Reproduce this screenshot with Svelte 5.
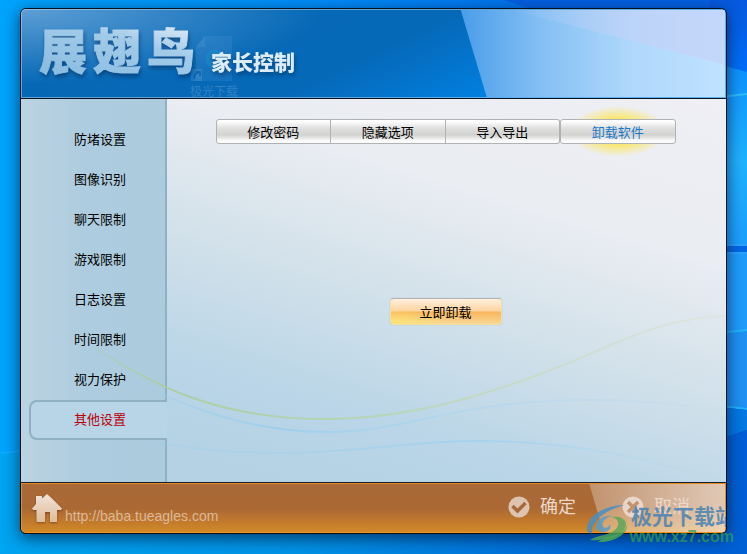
<script>
  const nav = ['防堵设置', '图像识别', '聊天限制', '游戏限制', '日志设置', '时间限制', '视力保护', '其他设置'];
  const tabs = ['修改密码', '隐藏选项', '导入导出', '卸载软件'];
  let currentNav = $state(7);
  let currentTab = $state(3);
</script>

<div class="desktop">
  <svg class="wallpaper" viewBox="0 0 747 554" preserveAspectRatio="none" aria-hidden="true">
    <defs>
      <linearGradient id="sky" x1="0" y1="0" x2="1" y2="0">
        <stop offset="0" stop-color="#00a4fc" />
        <stop offset="0.45" stop-color="#008cfa" />
        <stop offset="0.9" stop-color="#0560e2" />
        <stop offset="1" stop-color="#0458dc" />
      </linearGradient>
      <linearGradient id="floor" x1="0" y1="0" x2="1" y2="0">
        <stop offset="0" stop-color="#00a4f0" />
        <stop offset="0.4" stop-color="#0092e6" />
        <stop offset="0.8" stop-color="#0066d6" />
        <stop offset="1" stop-color="#005ed2" />
      </linearGradient>
      <linearGradient id="pane" x1="0" y1="0" x2="0" y2="1">
        <stop offset="0" stop-color="#0d90ff" />
        <stop offset="0.5" stop-color="#20b2ff" />
        <stop offset="1" stop-color="#1c9bff" />
      </linearGradient>
      <linearGradient id="deep" x1="0" y1="0" x2="0" y2="1">
        <stop offset="0" stop-color="#0759de" />
        <stop offset="1" stop-color="#0074ff" />
      </linearGradient>
    </defs>
    <rect width="747" height="554" fill="url(#sky)" />
    <rect y="454" width="747" height="100" fill="url(#floor)" />
    <path d="M503 0L747 74V0Z" fill="#0561e3" />
    <rect x="710" width="37" height="90" fill="url(#deep)" />
    <path d="M710 62L747 72V260H710Z" fill="url(#pane)" />
    <path d="M710 98L747 94" stroke="#2cc0ff" stroke-width="2" />
    <path d="M710 254H747V332L710 334Z" fill="#209cfd" />
    <path d="M710 245H747M710 253H747" stroke="#2aa4ff" stroke-width="2" />
    <rect x="710" y="246" width="37" height="6" fill="#0468e6" />
    <path d="M710 334L747 330V409L710 405Z" fill="#1f92f4" />
    <path d="M710 334L747 330M710 405L747 409" stroke="#20b8ff" stroke-width="2" />
    <path d="M710 406L747 410V430L710 442Z" fill="#0478e4" />
    <path d="M710 442L747 430V554H710Z" fill="#0160d4" />
    <path d="M0 453L21 451" stroke="#18b0ff" stroke-width="1" />
  </svg>

  <main class="window">
    <header>
      <svg class="sheen" viewBox="0 0 705 89" preserveAspectRatio="none" aria-hidden="true">
        <defs>
          <linearGradient id="glass" x1="0" y1="0" x2="1" y2="0">
            <stop offset="0" stop-color="#4b9dea" />
            <stop offset="0.3" stop-color="#84bff4" />
            <stop offset="0.65" stop-color="#b0d8fb" />
            <stop offset="1" stop-color="#bfe2ff" />
          </linearGradient>
          <linearGradient id="mist" x1="0" y1="0" x2="1" y2="0">
            <stop offset="0" stop-color="#c6d0f6" stop-opacity="0" />
            <stop offset="0.5" stop-color="#c6d0f6" stop-opacity="0.5" />
            <stop offset="1" stop-color="#c4d4f8" stop-opacity="0.8" />
          </linearGradient>
        </defs>
        <path d="M440 0H705V89H466Z" fill="url(#glass)" />
        <path d="M490 0H705V56Z" fill="url(#mist)" />
      </svg>
      <div class="ghost" aria-hidden="true">
        <svg width="44" height="48" viewBox="0 0 44 48">
          <path d="M15 1H42V46H6V12Z" fill="#6ba5d9" opacity="0.17" />
          <path d="M15 1V12H6Z" fill="#8fbde6" opacity="0.12" />
          <circle cx="25" cy="24" r="7" fill="none" stroke="#159bd4" stroke-width="5" opacity="0.35" />
          <path d="M1 34H12V46H1Z" fill="#8fbde6" opacity="0.2" />
          <path d="M4 44C4 40 5 38 8 38M6 37H10V41" fill="none" stroke="#0b62af" stroke-width="1.500" />
        </svg>
        <span>极光下载</span>
      </div>
      <h1><span>展</span><span>翅</span><span>鸟</span></h1>
      <h2>家长控制</h2>
    </header>

    <div class="body">
      <nav>
        {#each nav as item, i}
          <button class:active={i === currentNav} onclick={() => (currentNav = i)}>{item}</button>
        {/each}
      </nav>

      <section>
        <div class="tabs" role="tablist">
          {#each tabs as tab, i}
            <button role="tab" aria-selected={i === currentTab} onclick={() => (currentTab = i)}>{tab}</button>
          {/each}
        </div>
        <button class="uninstall">立即卸载</button>
      </section>

      <svg class="waves" viewBox="0 0 705 383" preserveAspectRatio="none" fill="none" aria-hidden="true">
        <defs>
          <linearGradient id="leaf" gradientUnits="userSpaceOnUse" x1="70" y1="0" x2="705" y2="0">
            <stop offset="0" stop-color="#a8cf9c" stop-opacity="0.2" />
            <stop offset="0.12" stop-color="#abcd9a" stop-opacity="0.9" />
            <stop offset="0.5" stop-color="#b9d6b0" stop-opacity="0.8" />
            <stop offset="1" stop-color="#dcdfcc" stop-opacity="0.4" />
          </linearGradient>
          <linearGradient id="water" gradientUnits="userSpaceOnUse" x1="110" y1="0" x2="700" y2="0">
            <stop offset="0" stop-color="#9ccdea" stop-opacity="0.2" />
            <stop offset="0.25" stop-color="#9bcfee" stop-opacity="0.9" />
            <stop offset="0.7" stop-color="#b8d8ee" stop-opacity="0.6" />
            <stop offset="1" stop-color="#b8d8ee" stop-opacity="0.1" />
          </linearGradient>
          <linearGradient id="ripple" gradientUnits="userSpaceOnUse" x1="110" y1="0" x2="700" y2="0">
            <stop offset="0" stop-color="#9ccdea" stop-opacity="0.2" />
            <stop offset="0.6" stop-color="#a4d2ee" stop-opacity="0.9" />
            <stop offset="1" stop-color="#b8d8ee" stop-opacity="0.1" />
          </linearGradient>
        </defs>
        <path d="M74 249C130 285 195 320 304 320C389 320 470 295 540 267C600 243 640 219 704 217" stroke="url(#leaf)" stroke-width="2" />
        <path d="M110 281C185 318 245 333 307 333C390 333 430 301 570 301C620 301 660 305 693 311" stroke="url(#water)" stroke-width="2" />
        <path d="M130 342C180 353 230 354 263 354C340 354 385 342 457 342C560 342 630 362 693 380" stroke="url(#ripple)" stroke-width="2" />
      </svg>
    </div>

    <footer>
      <svg class="sheen" viewBox="0 0 705 50" preserveAspectRatio="none" aria-hidden="true">
        <defs>
          <linearGradient id="amber" x1="0" y1="0" x2="1" y2="0">
            <stop offset="0" stop-color="#ffffff" stop-opacity="0.28" />
            <stop offset="1" stop-color="#ffffff" stop-opacity="0.64" />
          </linearGradient>
        </defs>
        <path d="M569 0H705V50H583Z" fill="url(#amber)" />
      </svg>
      <a href="http://baba.tueagles.com">
        <svg class="house" width="30" height="29" viewBox="0 0 30 29" aria-hidden="true">
          <defs>
            <linearGradient id="wall" x1="0" y1="0" x2="0" y2="1">
              <stop offset="0" stop-color="#f1e2d8" />
              <stop offset="1" stop-color="#dfbd9b" />
            </linearGradient>
          </defs>
          <path d="M15 0L20 4.500L30 14.500L29 16H25V28H18V18H13V28H4.500V16H1L0 14.500L4 10V2H10V4.500Z" fill="url(#wall)" />
        </svg>
        <span>http://baba.tueagles.com</span>
      </a>
      <div class="actions">
        <button>
          <svg width="22" height="22" viewBox="0 0 22 22" aria-hidden="true">
            <circle cx="11" cy="11" r="10.500" fill="#dfc3b1" />
            <path d="M4.500 10L9.500 15L17.500 7" fill="none" stroke="#a7683a" stroke-width="3.500" />
          </svg>
          确定
        </button>
        <button>
          <svg width="22" height="22" viewBox="0 0 22 22" aria-hidden="true">
            <circle cx="11" cy="11" r="10.500" fill="#e9d6ca" />
            <path d="M6 6L16 16M16 6L6 16" fill="none" stroke="#c1936f" stroke-width="3.500" />
          </svg>
          取消
        </button>
      </div>
      <span class="mark-name">极光下载站</span>
    </footer>

    <svg class="mark-logo" width="42" height="39" viewBox="0 0 42 39" aria-hidden="true">
      <path d="M39 1C20 1 2 11 1 24C0 28 4 30 6 29C5 16 20 6 39 1Z" fill="#458fc5" opacity="0.85" />
      <path d="M10 25C8 16 18 11 26 12C21 13 15 17 17 22C18 25 23 24 24 20C27 28 15 31 10 25Z" fill="#5b9cc6" opacity="0.85" />
      <path d="M26 13C37 12 43 17 40 24C36 32 22 31 12 38C26 39 41 31 41 22C41 15 35 12 26 13Z" fill="#4ba651" opacity="0.85" />
      <path d="M26 13C34 15 35 23 26 28C18 32 9 32 4 36C16 37 38 34 40 21C40 15 34 12 26 13Z" fill="#50a657" opacity="0.8" />
    </svg>
    <span class="mark-site">www.xz7.com</span>
  </main>
</div>

<style>
  :global(body) {
    margin: 0;
    overflow: hidden;
  }
  .desktop {
    position: relative;
    display: flex;
    box-sizing: border-box;
    min-height: 100vh;
    padding: 8px 20px 20px;
    font-family: "Liberation Sans", "Noto Sans CJK SC", sans-serif;
    font-size: 13px;
    color: #000;
    background: #0078e6;
  }
  .wallpaper {
    position: absolute;
    inset: 0;
    width: 100%;
    height: 100%;
  }
  button {
    margin: 0;
    padding: 0;
    border: 0;
    background: none;
    font: inherit;
    color: inherit;
    cursor: pointer;
  }
  .window {
    position: relative;
    flex: 1;
    display: flex;
    flex-direction: column;
    border: 1px solid #04101c;
    border-radius: 6px;
    background: #0a1420;
    box-shadow: 0 4px 16px rgba(0, 20, 50, 0.7);
  }
  header {
    position: relative;
    display: flex;
    align-items: flex-start;
    height: 89px;
    border-radius: 5px 5px 0 0;
    border-bottom: 1px solid #06121e;
    overflow: hidden;
    background:
      radial-gradient(ellipse 300px 75px at 0 0, rgba(150, 195, 235, 0.6), rgba(120, 175, 225, 0)),
      linear-gradient(155deg, #0768b4 0%, #0669b8 50%, #0085ea 78%);
    box-shadow: inset 0 0 0 1px rgba(190, 220, 245, 0.5);
  }
  .sheen {
    position: absolute;
    inset: 1px;
    width: calc(100% - 2px);
    height: calc(100% - 2px);
  }
  .ghost {
    position: absolute;
    left: 169px;
    top: 26px;
    display: flex;
    flex-direction: column;
    font-size: 12px;
    line-height: 18px;
    color: rgba(130, 180, 225, 0.35);
  }
  h1,
  h2 {
    position: relative;
    margin: 0;
    font-weight: 900;
    filter: drop-shadow(1px 3px 2px rgba(0, 40, 90, 0.55));
  }
  h1 {
    display: flex;
    gap: 6px;
    padding: 11px 0 0 18px;
    font-size: 48px;
    line-height: 66px;
    color: transparent;
    background: linear-gradient(15deg, #86badf 10%, #a3cbe9 60%, #dceaf6 85%);
    background-clip: text;
    -webkit-text-stroke: 1px transparent;
  }
  h2 {
    padding: 42px 0 0 16px;
    font-size: 21px;
    line-height: 24px;
    color: #dcebf8;
  }
  .body {
    position: relative;
    flex: 1;
    display: flex;
    min-height: 383px;
    background: linear-gradient(197deg, #efeff4 0%, #eaedf2 28%, #d2e1ea 50%, #b9d5e7 72%, #b4d2e4 90%);
  }
  .waves {
    position: absolute;
    inset: 0;
    width: 100%;
    height: 100%;
    pointer-events: none;
  }
  nav {
    position: relative;
    z-index: 0;
    box-sizing: border-box;
    display: flex;
    flex-direction: column;
    width: 146px;
    padding: 21px 0 0 8px;
    border-right: 2px solid #8fb1c3;
    background: linear-gradient(90deg, #bcd3e1, #adccdf 45%, #accbdd);
  }
  nav button {
    box-sizing: border-box;
    height: 40px;
    padding: 0 0 3px 45px;
    text-align: left;
  }
  nav .active {
    margin-right: -2px;
    padding-left: 43px;
    border: 2px solid #8fb1c3;
    border-right: 0;
    border-radius: 8px 0 0 8px;
    background: #b7d5e6;
    color: #b8000c;
  }
  section {
    flex: 1;
    display: flex;
    flex-direction: column;
    align-items: center;
    padding: 20px 2px 0 0;
  }
  .tabs {
    position: relative;
    z-index: 0;
    display: flex;
    width: 460px;
    max-width: 100%;
  }
  .tabs button {
    flex: 1;
    box-sizing: border-box;
    height: 25px;
    border: 1px solid #b0b3b6;
    border-left-width: 0;
    background: linear-gradient(#ffffff 5%, #e0e0e0 35%, #d2d2d0 65%, #fafafa 90%);
  }
  .tabs button:first-child {
    border-left-width: 1px;
    border-radius: 3px 0 0 3px;
  }
  .tabs button:nth-child(3) {
    border-radius: 0 3px 3px 0;
  }
  .tabs button:last-child {
    border-left-width: 1px;
    border-radius: 3px;
  }
  .tabs [aria-selected="true"] {
    position: relative;
    color: #1878c4;
  }
  .tabs [aria-selected="true"]::before {
    content: "";
    position: absolute;
    z-index: -1;
    inset: -14px 8px;
    background: radial-gradient(closest-side, #ffe240 30%, rgba(252, 230, 90, 0.7) 60%, rgba(250, 235, 130, 0));
  }
  .uninstall {
    box-sizing: border-box;
    width: 112px;
    height: 27px;
    margin-top: 154px;
    border: 1px solid #f6dfa4;
    border-top-color: #b8b3b4;
    border-radius: 4px;
    background:
      radial-gradient(ellipse 60px 16px at 0 100%, rgba(255, 235, 110, 0.7), rgba(255, 230, 110, 0)),
      linear-gradient(#fff0de, #fdd3a0 48%, #f8b65c 52%, #f8d898);
    box-shadow: 0 0 1px rgba(100, 130, 160, 0.7);
  }
  footer {
    position: relative;
    display: flex;
    justify-content: space-between;
    align-items: flex-start;
    height: 50px;
    border-top: 1px solid #10202c;
    border-radius: 0 0 5px 5px;
    overflow: hidden;
    background: linear-gradient(#a96a38, #aa6834 50%, #c27a2c 78%, #d38b28);
    box-shadow: inset 0 0 0 1px rgba(255, 150, 30, 0.75);
  }
  footer a {
    position: relative;
    display: flex;
    gap: 3px;
    padding: 11px 0 0 11px;
    font-size: 14px;
    line-height: 16px;
    color: #dcb89c;
    text-decoration: none;
  }
  footer a span {
    padding-top: 14px;
  }
  .house {
    filter: drop-shadow(0 1px 1px rgba(70, 35, 10, 0.5));
  }
  .actions {
    position: relative;
    display: flex;
    gap: 46px;
    padding: 12px 36px 0 0;
  }
  .actions button {
    display: flex;
    align-items: center;
    gap: 10px;
    height: 24px;
    font-size: 18px;
    line-height: 24px;
    color: #ecd9cb;
  }
  .mark-name {
    position: absolute;
    right: -10px;
    top: 20px;
    font-size: 21px;
    font-weight: 700;
    line-height: 28px;
    white-space: nowrap;
    color: rgba(70, 130, 180, 0.85);
  }
  .mark-logo {
    position: absolute;
    right: 98px;
    bottom: -10px;
  }
  .mark-site {
    position: absolute;
    right: -8px;
    bottom: -14px;
    font-size: 16px;
    font-weight: 700;
    line-height: 20px;
    color: rgba(45, 155, 90, 0.75);
  }
</style>
